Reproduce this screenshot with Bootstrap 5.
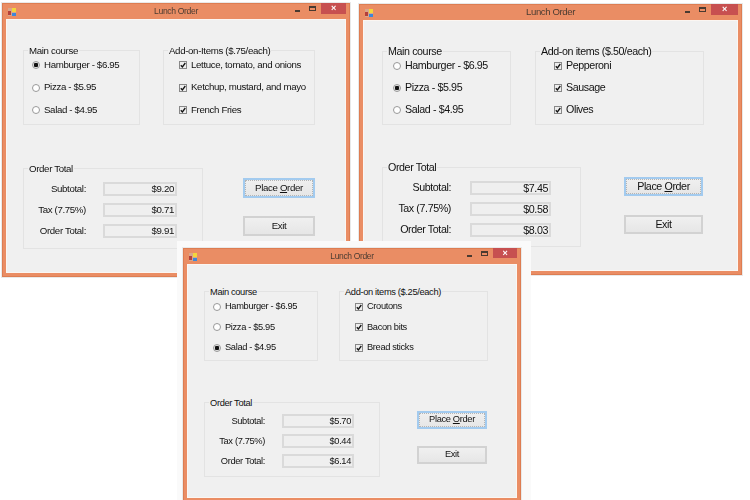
<!DOCTYPE html>
<html lang="en">
<head>
    <meta charset="UTF-8">
    <meta name="viewport" content="width=device-width, initial-scale=1.0">
    <title>Lunch Order</title>
    <link href="https://cdn.jsdelivr.net/npm/bootstrap@5.3.0/dist/css/bootstrap.min.css" rel="stylesheet">
    <style>
        body {
            background: #fff;
            width: 750px;
            height: 500px;
            overflow: hidden;
            position: relative;
            font-family: "Liberation Sans", Arial, sans-serif;
            color: #111;
        }
        .lo-win {
            position: absolute;
            display: flex;
            flex-direction: column;
            background: #ea8d64;
            border: 1px solid #dd7d52;
            padding: 0 3px 3px;
            font-size: var(--fs);
            letter-spacing: var(--ls);
            line-height: 1.1;
            box-shadow: 0 0 0 1px #e9e9e9;
            filter: blur(.3px);
        }
        .lo-win-a {
            left: 2px; top: 3px; width: 348px; height: 274px;
            --fs: 9.7px; --ls: -.35px; --title-fs: 8.6px; --close-w: 25px; --close-h: 11px;
            --pad-x: 16px; --pad-y: 30px;
            --main-w: 117px; --addon-w: 152px; --top-h: 75px; --top-gap: 23px;
            --pitch: 22.5px; --row-top: 2.75px; --rad-pad: 8px; --chk-pad: 15px;
            --order-mt: 43px; --order-w: 180px; --order-h: 81px;
            --order-top: 13px; --box-gap: 7px; --label-w: 62px; --label-gap: 17px; --box-w: 74px;
            --act-gap: 40px; --act-w: 72px; --act-top: 10px; --btn-h: 20px; --btn-gap: 18px;
        }
        .lo-win-b {
            left: 359px; top: 4px; width: 383px; height: 271px;
            --fs: 10.7px; --ls: -.4px; --title-fs: 9.6px; --close-w: 27px; --close-h: 11px;
            --pad-x: 18px; --pad-y: 30px;
            --main-w: 129px; --addon-w: 169px; --top-h: 74px; --top-gap: 24px;
            --pitch: 22px; --row-top: 3px; --rad-pad: 10px; --chk-pad: 18px;
            --order-mt: 42px; --order-w: 199px; --order-h: 80px;
            --order-top: 13px; --box-gap: 7px; --label-w: 68px; --label-gap: 19px; --box-w: 81px;
            --act-gap: 43px; --act-w: 79px; --act-top: 10px; --btn-h: 19px; --btn-gap: 19px;
        }
        .lo-win-c {
            left: 183px; top: 248px; width: 338px; height: 254px;
            --fs: 9.3px; --ls: -.35px; --title-fs: 8.5px; --close-w: 24px; --close-h: 10px;
            --pad-x: 16px; --pad-y: 26px;
            --main-w: 114px; --addon-w: 149px; --top-h: 70px; --top-gap: 21px;
            --pitch: 20.5px; --row-top: 4.25px; --rad-pad: 8px; --chk-pad: 15px;
            --order-mt: 41px; --order-w: 176px; --order-h: 75px;
            --order-top: 11px; --box-gap: 6px; --label-w: 60px; --label-gap: 17px; --box-w: 72px;
            --act-gap: 37px; --act-w: 70px; --act-top: 9px; --btn-h: 17.5px; --btn-gap: 17.5px;
        }
        .lo-halo {
            position: absolute;
            left: 177px; top: 241px; width: 354px; height: 259px;
            background: #fafafa;
        }
        .lo-title {
            height: 15px;
            flex: none;
            display: grid;
            grid-template-columns: 1fr auto 1fr;
            align-items: center;
            font-size: var(--title-fs);
            color: #4b3c32;
        }
        .lo-icon {
            display: block;
            margin-left: 2px;
        }
        .lo-controls {
            display: flex;
            justify-content: flex-end;
            align-self: start;
            margin-top: -1px;
        }
        .lo-min {
            width: 5px;
            height: 2px;
            background: #4a3a30;
            margin: 7px 9px 0 0;
        }
        .lo-max {
            width: 7px;
            height: 5px;
            border: 1px solid #4a3a30;
            border-top-width: 2px;
            margin: 3px 5px 0 0;
        }
        .lo-close {
            width: var(--close-w);
            height: var(--close-h);
            background: #c75050;
            color: #fff;
            font-size: 9px;
            font-weight: 700;
            line-height: var(--close-h);
            text-align: center;
        }
        .lo-client {
            flex-grow: 1;
            background: #f0f0f0;
            border: 1px solid #fbf6f2;
            padding: var(--pad-y) 0 0 var(--pad-x);
        }
        .lo-group {
            position: relative;
            flex: none;
            border: 1px solid #e3e3e3;
        }
        .lo-group-main { width: var(--main-w); height: var(--top-h); padding: var(--row-top) 0 0 var(--rad-pad); }
        .lo-group-addon { width: var(--addon-w); height: var(--top-h); margin-left: var(--top-gap); padding: var(--row-top) 0 0 var(--chk-pad); }
        .lo-group-order { width: var(--order-w); height: var(--order-h); padding-top: var(--order-top); }
        .lo-order-row { margin-top: var(--order-mt); }
        .lo-legend {
            position: absolute;
            left: 4px;
            top: -1px;
            transform: translateY(-40%);
            padding: 0 1px;
            background: #f0f0f0;
            white-space: nowrap;
        }
        .lo-opt {
            height: var(--pitch);
            white-space: nowrap;
        }
        .lo-radio {
            width: 8px;
            height: 8px;
            margin-right: 4px;
            flex: none;
            border-radius: 50%;
            border: 1px solid #999;
            background: #fff;
        }
        .lo-radio-on {
            background: radial-gradient(circle, #111 0 2px, #e4e4e4 2.5px);
        }
        .lo-check {
            width: 8px;
            height: 8px;
            margin-right: 4px;
            flex: none;
            display: block;
        }
        .lo-sum-row {
            display: flex;
            align-items: center;
            height: 14px;
            margin-bottom: var(--box-gap);
        }
        .lo-sum-label {
            width: var(--label-w);
            margin-right: var(--label-gap);
            text-align: right;
            white-space: nowrap;
        }
        .lo-sum-box {
            width: var(--box-w);
            height: 14px;
            line-height: 10px;
            border: 2px solid #dadada;
            background: #efefef;
            padding-right: 1px;
            text-align: right;
        }
        .lo-actions {
            width: var(--act-w);
            margin: var(--act-top) 0 0 var(--act-gap);
        }
        .lo-btn {
            display: block;
            width: 100%;
            height: var(--btn-h);
            padding: 0;
            margin-bottom: var(--btn-gap);
            font-size: var(--fs);
            letter-spacing: var(--ls);
            line-height: 1;
            color: #111;
            border: 2px solid #d2d2d2;
            border-radius: 0;
            background: linear-gradient(#f0f0f0, #e6e6e6);
        }
        .lo-btn-default {
            border-color: #a3cbef;
            outline: 1px dotted #b4b4b4;
            outline-offset: -3px;
        }
    </style>
</head>
<body>
    <div class="lo-win lo-win-a">
        <div class="lo-title">
            <div><svg width="8" height="8" viewBox="0 0 8 8" class="lo-icon"><rect width="8" height="8" fill="#d9a58a"/><rect x="0" y="3" width="3" height="4" fill="#b5403a"/><rect x="4" y="0" width="4" height="4" fill="#f3d53c"/><rect x="4" y="5" width="4" height="3" fill="#3f87d8"/></svg></div>
            <div>Lunch Order</div>
            <div class="lo-controls"><div class="lo-min"></div><div class="lo-max"></div><div class="lo-close">&#215;</div></div>
        </div>
        <div class="lo-client">
            <div class="d-flex">
                <div class="lo-group lo-group-main">
                    <div class="lo-legend">Main course</div>
                    <div class="lo-opt d-flex align-items-center"><span class="lo-radio lo-radio-on"></span>Hamburger - $6.95</div>
                    <div class="lo-opt d-flex align-items-center"><span class="lo-radio"></span>Pizza - $5.95</div>
                    <div class="lo-opt d-flex align-items-center"><span class="lo-radio"></span>Salad - $4.95</div>
                </div>
                <div class="lo-group lo-group-addon">
                    <div class="lo-legend">Add-on-Items ($.75/each)</div>
                    <div class="lo-opt d-flex align-items-center"><svg class="lo-check" viewBox="0 0 8 8"><rect x=".5" y=".5" width="7" height="7" fill="#eee" stroke="#888"/><path d="M1.8 4.2 3.4 5.9 6.3 2" fill="none" stroke="#111" stroke-width="1.3"/></svg>Lettuce, tomato, and onions</div>
                    <div class="lo-opt d-flex align-items-center"><svg class="lo-check" viewBox="0 0 8 8"><rect x=".5" y=".5" width="7" height="7" fill="#eee" stroke="#888"/><path d="M1.8 4.2 3.4 5.9 6.3 2" fill="none" stroke="#111" stroke-width="1.3"/></svg>Ketchup, mustard, and mayo</div>
                    <div class="lo-opt d-flex align-items-center"><svg class="lo-check" viewBox="0 0 8 8"><rect x=".5" y=".5" width="7" height="7" fill="#eee" stroke="#888"/><path d="M1.8 4.2 3.4 5.9 6.3 2" fill="none" stroke="#111" stroke-width="1.3"/></svg>French Fries</div>
                </div>
            </div>
            <div class="d-flex lo-order-row">
                <div class="lo-group lo-group-order">
                    <div class="lo-legend">Order Total</div>
                    <div class="lo-sum-row"><div class="lo-sum-label">Subtotal:</div><div class="lo-sum-box">$9.20</div></div>
                    <div class="lo-sum-row"><div class="lo-sum-label">Tax (7.75%)</div><div class="lo-sum-box">$0.71</div></div>
                    <div class="lo-sum-row"><div class="lo-sum-label">Order Total:</div><div class="lo-sum-box">$9.91</div></div>
                </div>
                <div class="lo-actions">
                    <button type="button" class="btn lo-btn lo-btn-default">Place <u>O</u>rder</button>
                    <button type="button" class="btn lo-btn">Exit</button>
                </div>
            </div>
        </div>
    </div>

    <div class="lo-win lo-win-b">
        <div class="lo-title">
            <div><svg width="8" height="8" viewBox="0 0 8 8" class="lo-icon"><rect width="8" height="8" fill="#d9a58a"/><rect x="0" y="3" width="3" height="4" fill="#b5403a"/><rect x="4" y="0" width="4" height="4" fill="#f3d53c"/><rect x="4" y="5" width="4" height="3" fill="#3f87d8"/></svg></div>
            <div>Lunch Order</div>
            <div class="lo-controls"><div class="lo-min"></div><div class="lo-max"></div><div class="lo-close">&#215;</div></div>
        </div>
        <div class="lo-client">
            <div class="d-flex">
                <div class="lo-group lo-group-main">
                    <div class="lo-legend">Main course</div>
                    <div class="lo-opt d-flex align-items-center"><span class="lo-radio"></span>Hamburger - $6.95</div>
                    <div class="lo-opt d-flex align-items-center"><span class="lo-radio lo-radio-on"></span>Pizza - $5.95</div>
                    <div class="lo-opt d-flex align-items-center"><span class="lo-radio"></span>Salad - $4.95</div>
                </div>
                <div class="lo-group lo-group-addon">
                    <div class="lo-legend">Add-on items ($.50/each)</div>
                    <div class="lo-opt d-flex align-items-center"><svg class="lo-check" viewBox="0 0 8 8"><rect x=".5" y=".5" width="7" height="7" fill="#eee" stroke="#888"/><path d="M1.8 4.2 3.4 5.9 6.3 2" fill="none" stroke="#111" stroke-width="1.3"/></svg>Pepperoni</div>
                    <div class="lo-opt d-flex align-items-center"><svg class="lo-check" viewBox="0 0 8 8"><rect x=".5" y=".5" width="7" height="7" fill="#eee" stroke="#888"/><path d="M1.8 4.2 3.4 5.9 6.3 2" fill="none" stroke="#111" stroke-width="1.3"/></svg>Sausage</div>
                    <div class="lo-opt d-flex align-items-center"><svg class="lo-check" viewBox="0 0 8 8"><rect x=".5" y=".5" width="7" height="7" fill="#eee" stroke="#888"/><path d="M1.8 4.2 3.4 5.9 6.3 2" fill="none" stroke="#111" stroke-width="1.3"/></svg>Olives</div>
                </div>
            </div>
            <div class="d-flex lo-order-row">
                <div class="lo-group lo-group-order">
                    <div class="lo-legend">Order Total</div>
                    <div class="lo-sum-row"><div class="lo-sum-label">Subtotal:</div><div class="lo-sum-box">$7.45</div></div>
                    <div class="lo-sum-row"><div class="lo-sum-label">Tax (7.75%)</div><div class="lo-sum-box">$0.58</div></div>
                    <div class="lo-sum-row"><div class="lo-sum-label">Order Total:</div><div class="lo-sum-box">$8.03</div></div>
                </div>
                <div class="lo-actions">
                    <button type="button" class="btn lo-btn lo-btn-default">Place <u>O</u>rder</button>
                    <button type="button" class="btn lo-btn">Exit</button>
                </div>
            </div>
        </div>
    </div>

    <div class="lo-halo"></div>

    <div class="lo-win lo-win-c">
        <div class="lo-title">
            <div><svg width="8" height="8" viewBox="0 0 8 8" class="lo-icon"><rect width="8" height="8" fill="#d9a58a"/><rect x="0" y="3" width="3" height="4" fill="#b5403a"/><rect x="4" y="0" width="4" height="4" fill="#f3d53c"/><rect x="4" y="5" width="4" height="3" fill="#3f87d8"/></svg></div>
            <div>Lunch Order</div>
            <div class="lo-controls"><div class="lo-min"></div><div class="lo-max"></div><div class="lo-close">&#215;</div></div>
        </div>
        <div class="lo-client">
            <div class="d-flex">
                <div class="lo-group lo-group-main">
                    <div class="lo-legend">Main course</div>
                    <div class="lo-opt d-flex align-items-center"><span class="lo-radio"></span>Hamburger - $6.95</div>
                    <div class="lo-opt d-flex align-items-center"><span class="lo-radio"></span>Pizza - $5.95</div>
                    <div class="lo-opt d-flex align-items-center"><span class="lo-radio lo-radio-on"></span>Salad - $4.95</div>
                </div>
                <div class="lo-group lo-group-addon">
                    <div class="lo-legend">Add-on items ($.25/each)</div>
                    <div class="lo-opt d-flex align-items-center"><svg class="lo-check" viewBox="0 0 8 8"><rect x=".5" y=".5" width="7" height="7" fill="#eee" stroke="#888"/><path d="M1.8 4.2 3.4 5.9 6.3 2" fill="none" stroke="#111" stroke-width="1.3"/></svg>Croutons</div>
                    <div class="lo-opt d-flex align-items-center"><svg class="lo-check" viewBox="0 0 8 8"><rect x=".5" y=".5" width="7" height="7" fill="#eee" stroke="#888"/><path d="M1.8 4.2 3.4 5.9 6.3 2" fill="none" stroke="#111" stroke-width="1.3"/></svg>Bacon bits</div>
                    <div class="lo-opt d-flex align-items-center"><svg class="lo-check" viewBox="0 0 8 8"><rect x=".5" y=".5" width="7" height="7" fill="#eee" stroke="#888"/><path d="M1.8 4.2 3.4 5.9 6.3 2" fill="none" stroke="#111" stroke-width="1.3"/></svg>Bread sticks</div>
                </div>
            </div>
            <div class="d-flex lo-order-row">
                <div class="lo-group lo-group-order">
                    <div class="lo-legend">Order Total</div>
                    <div class="lo-sum-row"><div class="lo-sum-label">Subtotal:</div><div class="lo-sum-box">$5.70</div></div>
                    <div class="lo-sum-row"><div class="lo-sum-label">Tax (7.75%)</div><div class="lo-sum-box">$0.44</div></div>
                    <div class="lo-sum-row"><div class="lo-sum-label">Order Total:</div><div class="lo-sum-box">$6.14</div></div>
                </div>
                <div class="lo-actions">
                    <button type="button" class="btn lo-btn lo-btn-default">Place <u>O</u>rder</button>
                    <button type="button" class="btn lo-btn">Exit</button>
                </div>
            </div>
        </div>
    </div>

    <script src="https://cdn.jsdelivr.net/npm/bootstrap@5.3.0/dist/js/bootstrap.bundle.min.js"></script>
</body>
</html>
